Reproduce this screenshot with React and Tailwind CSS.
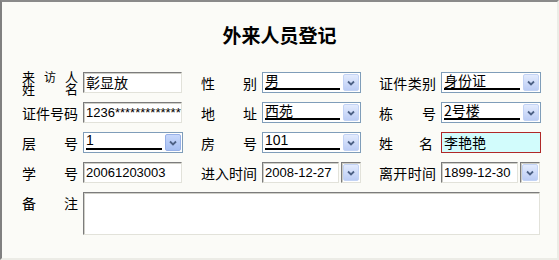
import React from "react";

const CJK = { fontFamily: '"Noto Sans CJK SC", "Noto Sans", sans-serif' };
const LAT = { fontFamily: '"Liberation Sans", "Noto Sans CJK SC", sans-serif' };

function ArrowBtn({ dark }) {
  return (
    <div
      className={`flex h-[17px] w-[16px] shrink-0 items-center justify-center rounded-[2px] border ${
        dark
          ? "border-[#98b1e8] bg-gradient-to-b from-[#c8d8fb] to-[#a6bff2]"
          : "border-[#c3d3f5] bg-gradient-to-b from-[#e3ebfd] to-[#bccdf5]"
      }`}
    >
      <svg width="8" height="6" viewBox="0 0 8 6">
        <path d="M1 1.5 L4 4.5 L7 1.5" fill="none" stroke="#4d6185" strokeWidth="1.8" />
      </svg>
    </div>
  );
}

function Select({ value, dark, w = "w-[99px]", latin }) {
  return (
    <div className={`flex h-[21px] ${w} shrink-0 items-center border border-[#7f9db9] bg-white pl-[2px] pr-[1px]`}>
      <div className="flex h-full flex-1 items-end pb-[2px] pr-[3px]">
        <div
          className="w-full border-b-2 border-black text-[14px] leading-[15px] text-black"
          style={latin ? LAT : CJK}
        >
          {value}
        </div>
      </div>
      <ArrowBtn dark={dark} />
    </div>
  );
}

const inset =
  "border border-t-[#7c7c7c] border-l-[#7c7c7c] border-r-[#e2e2da] border-b-[#e2e2da] shadow-[inset_1px_1px_0_#cfcfc8] bg-white";

function TextBox({ value, latin, w = "w-[99px]" }) {
  return (
    <div
      className={`flex h-[21px] ${w} shrink-0 items-center overflow-hidden whitespace-nowrap pl-[2px] ${inset} ${
        latin ? "text-[13px]" : "text-[14px]"
      } text-black`}
      style={latin ? LAT : CJK}
    >
      {value}
    </div>
  );
}

function DateBox({ value }) {
  return (
    <div className="flex h-[21px] w-[99px] shrink-0 items-center gap-[2px]">
      <TextBox value={value} latin w="w-[77px]" />
      <div className={`flex h-[21px] w-[20px] items-center justify-center ${inset}`}>
        <ArrowBtn />
      </div>
    </div>
  );
}

function Label({ chars, w = "w-[56px]" }) {
  return (
    <div
      className={`flex ${w} shrink-0 items-center justify-between text-[14px] leading-[16px] text-black`}
      style={CJK}
    >
      {chars.map((c, i) => (
        <span key={i}>{c}</span>
      ))}
    </div>
  );
}

function Row({ children }) {
  return <div className="flex h-[21px] items-center">{children}</div>;
}

export default function App() {
  return (
    <div className="h-[260px] w-[559px] overflow-hidden bg-[#fbfbf7]">
      <div className="flex h-[260px] w-[559px] flex-col border-l-2 border-t-2 border-r-2 border-b-2 border-l-[#808080] border-t-[#8a8a8a] border-r-[#ecece6] border-b-[#ecece6] pl-[20px] pt-[21px]">
        <div
          className="h-[24px] pr-[20px] text-center text-[19px] font-bold leading-[24px] text-black"
          style={CJK}
        >
          外来人员登记
        </div>

        <div className="mt-[25px] flex flex-col gap-[9px]">
          <Row>
            <div className="flex w-[56px] shrink-0 flex-col text-[13px] leading-[12px] text-black" style={CJK}>
              <div className="flex justify-between">
                <span>来</span>
                <span className="text-[12px]">访</span>
                <span>人</span>
              </div>
              <div className="flex justify-between">
                <span>姓</span>
                <span>名</span>
              </div>
            </div>
            <div className="ml-[5px]">
              <TextBox value="彰显放" />
            </div>
            <div className="ml-[19px]">
              <Label chars={["性", "别"]} />
            </div>
            <div className="ml-[5px]">
              <Select value="男" />
            </div>
            <div className="ml-[18px]">
              <Label chars={["证", "件", "类", "别"]} w="w-[57px]" />
            </div>
            <div className="ml-[5px]">
              <Select value="身份证" w="w-[100px]" />
            </div>
          </Row>

          <Row>
            <Label chars={["证", "件", "号", "码"]} />
            <div className="ml-[5px]">
              <TextBox value="1236******************" latin />
            </div>
            <div className="ml-[19px]">
              <Label chars={["地", "址"]} />
            </div>
            <div className="ml-[5px]">
              <Select value="西苑" />
            </div>
            <div className="ml-[18px]">
              <Label chars={["栋", "号"]} w="w-[57px]" />
            </div>
            <div className="ml-[5px]">
              <Select value="2号楼" w="w-[100px]" />
            </div>
          </Row>

          <Row>
            <Label chars={["层", "号"]} />
            <div className="ml-[5px]">
              <Select value="1" dark w="w-[100px]" latin />
            </div>
            <div className="ml-[18px]">
              <Label chars={["房", "号"]} />
            </div>
            <div className="ml-[5px]">
              <Select value="101" latin />
            </div>
            <div className="ml-[18px]">
              <Label chars={["姓", "名"]} w="w-[54px]" />
            </div>
            <div className="ml-[8px]">
              <div
                className="flex h-[21px] w-[100px] items-center border border-[#b02828] bg-[#d2fcfc] pl-[2px] text-[14px] text-black"
                style={CJK}
              >
                李艳艳
              </div>
            </div>
          </Row>

          <Row>
            <Label chars={["学", "号"]} />
            <div className="ml-[5px]">
              <TextBox value="20061203003" latin />
            </div>
            <div className="ml-[19px]">
              <Label chars={["进", "入", "时", "间"]} />
            </div>
            <div className="ml-[5px]">
              <DateBox value="2008-12-27" />
            </div>
            <div className="ml-[18px]">
              <Label chars={["离", "开", "时", "间"]} w="w-[57px]" />
            </div>
            <div className="ml-[5px]">
              <DateBox value="1899-12-30" />
            </div>
          </Row>

          <div className="flex items-start">
            <div className="pt-[3px]">
              <Label chars={["备", "注"]} />
            </div>
            <div className={`ml-[5px] h-[43px] w-[457px] ${inset}`} />
          </div>
        </div>
      </div>
    </div>
  );
}
